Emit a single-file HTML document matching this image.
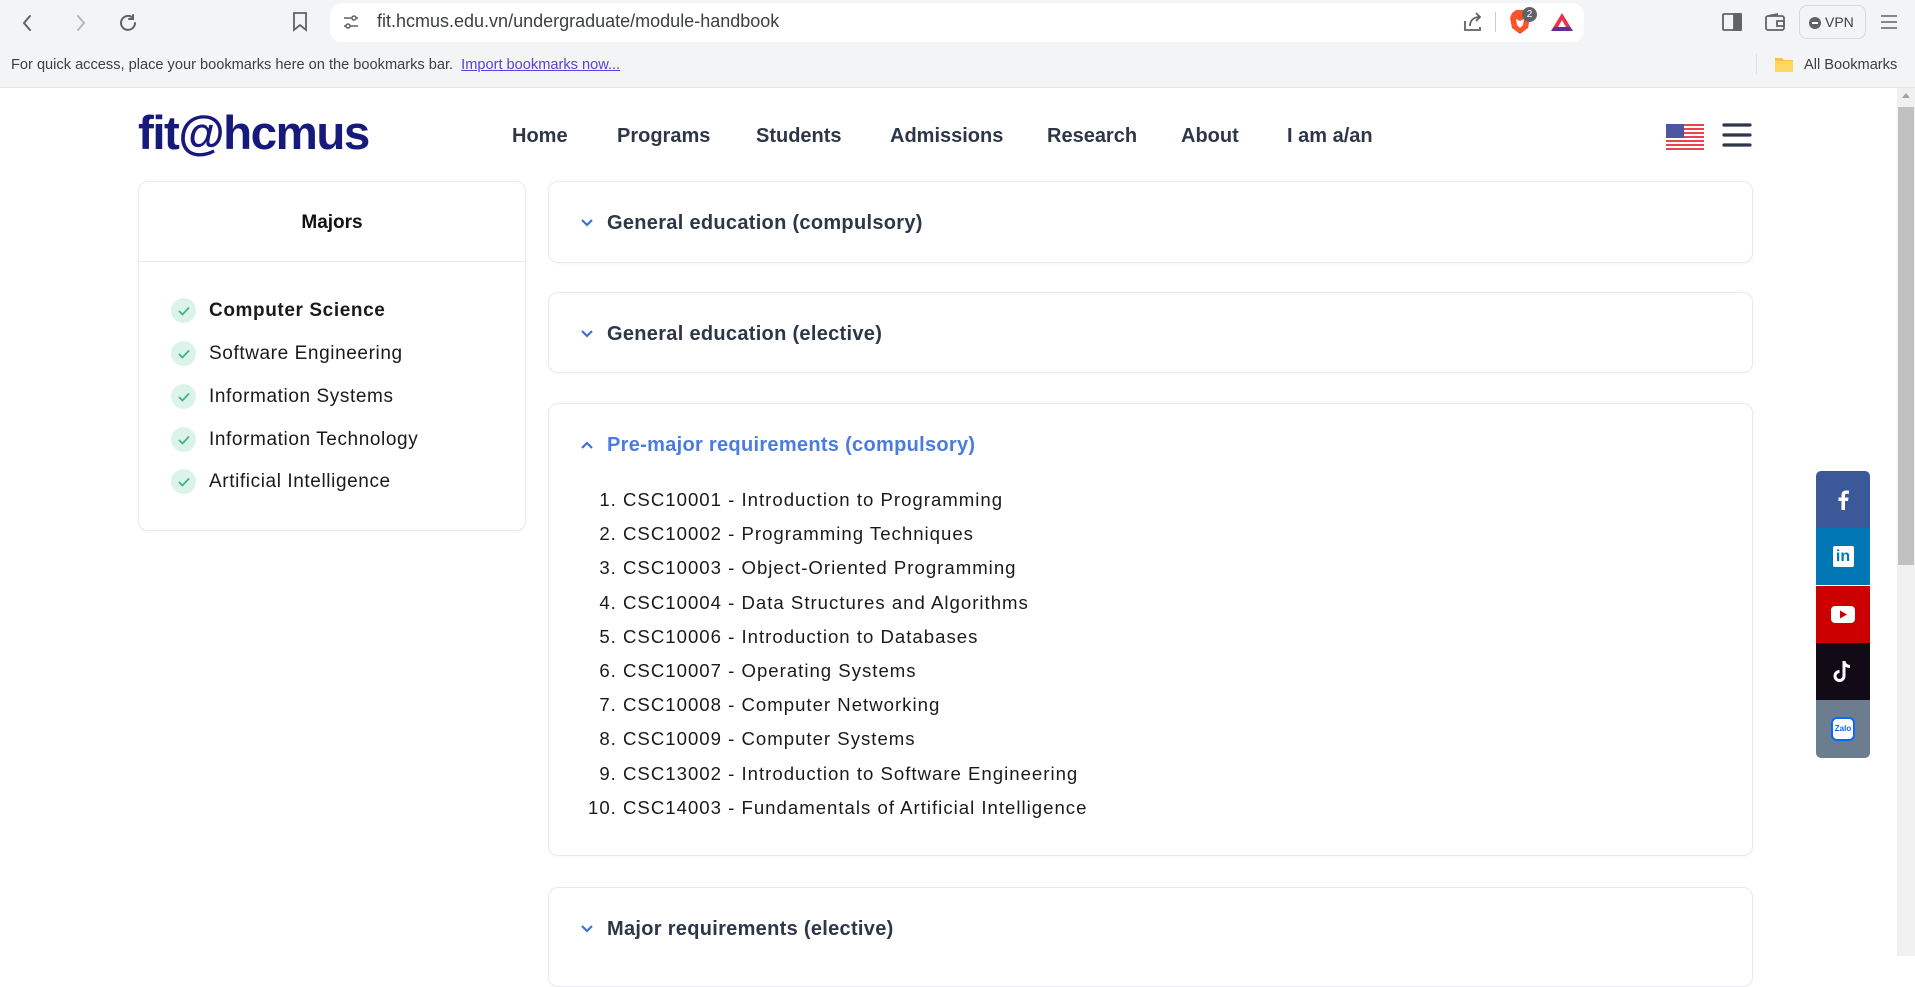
<!DOCTYPE html>
<html><head><meta charset="utf-8"><style>
*{box-sizing:border-box;margin:0;padding:0}
body{width:1915px;height:956px;overflow:hidden;font-family:"Liberation Sans",sans-serif;background:#fff;position:relative}
.abs{position:absolute}
.top{left:0;top:0;width:1915px;height:88px;background:#f3f4f6;border-bottom:1px solid #e3e5e8}
.url{left:330px;top:3px;width:1254px;height:39px;background:#fff;border-radius:12px}
.urltext{left:377px;top:11px;font-size:18px;color:#3c4043}
.bm{left:11px;top:57px;font-size:14.6px;color:#3c4043}
.bm a{color:#5b3fe0;text-decoration:underline;margin-left:4px}
.logo{left:138px;top:106px;font-size:47.5px;font-weight:bold;color:#161a7a;letter-spacing:-1.5px}
.nav{top:125px;font-size:20px;font-weight:bold;color:#2d3748}
.card{background:#fff;border:1px solid #e8eaf0;border-radius:10px;box-shadow:0 1px 4px rgba(0,0,0,.03)}
.side{left:138px;top:181px;width:388px;height:350px}
.mt{position:absolute;left:0;width:100%;top:30px;text-align:center;font-size:19px;font-weight:bold;color:#111}
.div{position:absolute;left:0;right:0;top:79px;border-top:1px solid #e8eaf0}
.item{position:absolute;left:32px;font-size:19px;color:#1a1a1a;display:flex;align-items:center;letter-spacing:0.6px}
.chk{width:25px;height:25px;border-radius:50%;background:#dcf3ea;margin-right:13px;display:flex;align-items:center;justify-content:center}
.ct{position:absolute;left:58px;font-size:20px;font-weight:bold;color:#2d3748;letter-spacing:0.3px}
.cv{position:absolute;left:31px}
ol{position:absolute;left:74px;top:79px;font-size:18.6px;color:#1a1a1a;padding-left:0;list-style-position:outside;letter-spacing:1px}
ol li{height:34.2px;line-height:34px;margin-left:0}
.soc{left:1816px;width:54px;height:57px;display:flex;align-items:center;justify-content:center}
</style></head><body>
<div class="abs top"></div>
<svg class="abs" style="left:16px;top:12px" width="130" height="22" viewBox="0 0 130 22" fill="none" stroke-width="2" stroke-linecap="round">
<path d="M14 4l-6 7 6 7" stroke="#5f6368"/><path d="M62 4l6 7-6 7" stroke="#b5b8bc"/>
<path d="M117 6a7 7 0 1 0 2 5M117 3v4h-4" stroke="#5f6368"/></svg>
<svg class="abs" style="left:292px;top:12px" width="16" height="20" viewBox="0 0 16 20" fill="none" stroke="#5f6368" stroke-width="1.8"><path d="M2 1h12v17l-6-5-6 5z"/></svg>
<div class="abs url"></div>
<svg class="abs" style="left:343px;top:14px" width="16" height="16" viewBox="0 0 16 16" fill="none" stroke="#5f6368" stroke-width="1.5"><path d="M1 4h8M13 4h2M1 12h2M7 12h8"/><circle cx="11" cy="4" r="2"/><circle cx="5" cy="12" r="2"/></svg>
<div class="abs urltext">fit.hcmus.edu.vn/undergraduate/module-handbook</div>
<svg class="abs" style="left:1462px;top:11px" width="22" height="22" viewBox="0 0 22 22" fill="none" stroke="#5f6368" stroke-width="1.8"><path d="M3 10v9h15v-3M8 15c0-6 4-9 10-9M14 2l4 4-4 4"/></svg>
<div class="abs" style="left:1495px;top:12px;width:1px;height:20px;background:#ccc"></div>
<svg class="abs" style="left:1508px;top:9px" width="24" height="26" viewBox="0 0 24 26"><path d="M4 4l4-3h8l4 3 2 5-2 10-8 6-8-6-2-10z" fill="#fb542b"/><path d="M8 10l4 2 4-2-1 6-3 3-3-3z" fill="#fff"/></svg>
<div class="abs" style="left:1522px;top:7px;width:15px;height:15px;border-radius:50%;background:#5f6368;color:#fff;font-size:10px;text-align:center;line-height:15px">2</div>
<svg class="abs" style="left:1550px;top:12px" width="24" height="20" viewBox="0 0 24 20"><path d="M12 1L1 19h22z" fill="#e9344a"/><path d="M12 8l-5 9h10z" fill="#fff"/><path d="M1 19h22l-3-4H4z" fill="#662d91"/></svg>
<svg class="abs" style="left:1722px;top:13px" width="20" height="18" viewBox="0 0 20 18" fill="none" stroke="#5f6368" stroke-width="1.8"><rect x="1" y="1" width="18" height="16" rx="1"/><rect x="12" y="1" width="7" height="16" fill="#5f6368"/></svg>
<svg class="abs" style="left:1765px;top:13px" width="20" height="18" viewBox="0 0 20 18" fill="none" stroke="#5f6368" stroke-width="1.8"><rect x="1" y="3" width="18" height="14" rx="2"/><path d="M3 3l10-2M12 8h7v5h-7z"/></svg>
<div class="abs" style="left:1799px;top:5px;width:67px;height:34px;border:1px solid #d5dae0;border-radius:8px;font-size:14px;color:#3c4043;line-height:32px;padding-left:9px"><span style="display:inline-block;width:12px;height:12px;border-radius:50%;background:#5f6368;vertical-align:-2px;margin-right:4px;position:relative"><span style="position:absolute;left:3px;top:5px;width:6px;height:2px;background:#fff"></span></span>VPN</div>
<svg class="abs" style="left:1880px;top:14px" width="18" height="16" viewBox="0 0 18 16" stroke="#5f6368" stroke-width="1.6"><path d="M1 2h16M1 8h16M1 14h16"/></svg>
<div class="abs bm">For quick access, place your bookmarks here on the bookmarks bar. <a>Import bookmarks now...</a></div>
<div class="abs" style="left:1756px;top:54px;width:1px;height:20px;background:#e0e0e0"></div>
<svg class="abs" style="left:1774px;top:56px" width="20" height="17" viewBox="0 0 20 17"><path d="M1 2h7l2 2h9v12H1z" fill="#f6c445"/><path d="M1 5h18v11H1z" fill="#fcd860"/></svg>
<div class="abs" style="left:1804px;top:57px;font-size:14.6px;color:#3c4043">All Bookmarks</div>

<div class="abs" style="left:1897px;top:88px;width:18px;height:868px;background:#f1f1f1"></div>
<div class="abs" style="left:1898px;top:107px;width:16px;height:458px;background:#c1c1c1"></div>
<svg class="abs" style="left:1901px;top:92px" width="10" height="8"><path d="M5 1l4 5H1z" fill="#a3a3a3"/></svg>

<div class="abs logo">fit@hcmus</div>
<div class="abs nav" style="left:512px">Home</div>
<div class="abs nav" style="left:617px">Programs</div>
<div class="abs nav" style="left:756px">Students</div>
<div class="abs nav" style="left:890px">Admissions</div>
<div class="abs nav" style="left:1047px">Research</div>
<div class="abs nav" style="left:1181px">About</div>
<div class="abs nav" style="left:1287px">I am a/an</div>
<svg class="abs" style="left:1666px;top:124px" width="38" height="26" viewBox="0 0 38 26">
<rect width="38" height="26" fill="#fff"/>
<g fill="#e8434f"><rect y="0" width="38" height="2"/><rect y="4" width="38" height="2"/><rect y="8" width="38" height="2"/><rect y="12" width="38" height="2"/><rect y="16" width="38" height="2"/><rect y="20" width="38" height="2"/><rect y="24" width="38" height="2"/></g>
<rect width="18" height="14" fill="#4f56a0"/></svg>
<svg class="abs" style="left:1722px;top:123px" width="30" height="24" viewBox="0 0 30 24" stroke="#2d3748" stroke-width="3.2" stroke-linecap="round"><path d="M2 2h26M2 12h26M2 22h26"/></svg>

<div class="abs card side">
<div class="mt">Majors</div><div class="div"></div>
<div class="item" style="top:116px;font-weight:bold"><span class="chk"><svg width="12" height="10" viewBox="0 0 12 10" fill="none" stroke="#3cb48a" stroke-width="1.8"><path d="M1 5l3.5 3.5L11 1.5"/></svg></span>Computer Science</div>
<div class="item" style="top:159px"><span class="chk"><svg width="12" height="10" viewBox="0 0 12 10" fill="none" stroke="#3cb48a" stroke-width="1.8"><path d="M1 5l3.5 3.5L11 1.5"/></svg></span>Software Engineering</div>
<div class="item" style="top:202px"><span class="chk"><svg width="12" height="10" viewBox="0 0 12 10" fill="none" stroke="#3cb48a" stroke-width="1.8"><path d="M1 5l3.5 3.5L11 1.5"/></svg></span>Information Systems</div>
<div class="item" style="top:245px"><span class="chk"><svg width="12" height="10" viewBox="0 0 12 10" fill="none" stroke="#3cb48a" stroke-width="1.8"><path d="M1 5l3.5 3.5L11 1.5"/></svg></span>Information Technology</div>
<div class="item" style="top:287px"><span class="chk"><svg width="12" height="10" viewBox="0 0 12 10" fill="none" stroke="#3cb48a" stroke-width="1.8"><path d="M1 5l3.5 3.5L11 1.5"/></svg></span>Artificial Intelligence</div>
</div>

<div class="abs card" style="left:548px;top:181px;width:1205px;height:82px">
<svg class="cv" style="top:36px" width="14" height="10" viewBox="0 0 14 10" fill="none" stroke="#3d6fd9" stroke-width="2.2"><path d="M2 2l5 5 5-5"/></svg>
<div class="ct" style="top:30px">General education (compulsory)</div></div>
<div class="abs card" style="left:548px;top:292px;width:1205px;height:81px">
<svg class="cv" style="top:36px" width="14" height="10" viewBox="0 0 14 10" fill="none" stroke="#3d6fd9" stroke-width="2.2"><path d="M2 2l5 5 5-5"/></svg>
<div class="ct" style="top:30px">General education (elective)</div></div>
<div class="abs card" style="left:548px;top:403px;width:1205px;height:453px">
<svg class="cv" style="top:36px" width="14" height="10" viewBox="0 0 14 10" fill="none" stroke="#3d6fd9" stroke-width="2.2"><path d="M2 8l5-5 5 5"/></svg>
<div class="ct" style="top:30px;color:#4a7be0">Pre-major requirements (compulsory)</div>
<ol>
<li>CSC10001 - Introduction to Programming</li>
<li>CSC10002 - Programming Techniques</li>
<li>CSC10003 - Object-Oriented Programming</li>
<li>CSC10004 - Data Structures and Algorithms</li>
<li>CSC10006 - Introduction to Databases</li>
<li>CSC10007 - Operating Systems</li>
<li>CSC10008 - Computer Networking</li>
<li>CSC10009 - Computer Systems</li>
<li>CSC13002 - Introduction to Software Engineering</li>
<li>CSC14003 - Fundamentals of Artificial Intelligence</li>
</ol></div>
<div class="abs card" style="left:548px;top:887px;width:1205px;height:100px">
<svg class="cv" style="top:36px" width="14" height="10" viewBox="0 0 14 10" fill="none" stroke="#3d6fd9" stroke-width="2.2"><path d="M2 2l5 5 5-5"/></svg>
<div class="ct" style="top:30px">Major requirements (elective)</div></div>

<div class="abs soc" style="top:471px;background:#3b5998;border-radius:5px 5px 0 0"><svg width="12" height="20" viewBox="0 0 12 20"><path d="M8 20V11h3l.5-3.5H8V5.5C8 4.5 8.3 3.8 9.8 3.8H12V.7C11.6.6 10.4.5 9 .5 6.2.5 4.5 2.2 4.5 5.2V7.5H1.5V11h3v9z" fill="#fff"/></svg></div>
<div class="abs soc" style="top:528px;background:#0077b5"><div style="width:21px;height:21px;background:#fff;border-radius:2px;color:#0077b5;font-weight:bold;font-size:16px;line-height:21px;text-align:center">in</div></div>
<div class="abs soc" style="top:586px;background:#c00"><svg width="24" height="17" viewBox="0 0 24 17"><rect width="24" height="17" rx="4" fill="#fff"/><path d="M9 4.5v8l7-4z" fill="#c00"/></svg></div>
<div class="abs soc" style="top:643px;background:#120a17"><svg width="20" height="24" viewBox="0 0 20 24" fill="none" stroke="#fff" stroke-width="3"><path d="M11 1v15a4.5 4.5 0 1 1-4.5-4.5M11 1c0 3 2.5 5.5 6 5.5"/></svg></div>
<div class="abs soc" style="top:700px;height:58px;background:#6b7d8f;border-radius:0 0 5px 5px"><div style="width:24px;height:24px;background:#fff;border:2px solid #0a68ff;border-radius:6px;color:#0a68ff;font-size:8px;font-weight:bold;text-align:center;line-height:20px">Zalo</div></div>
</body></html>
